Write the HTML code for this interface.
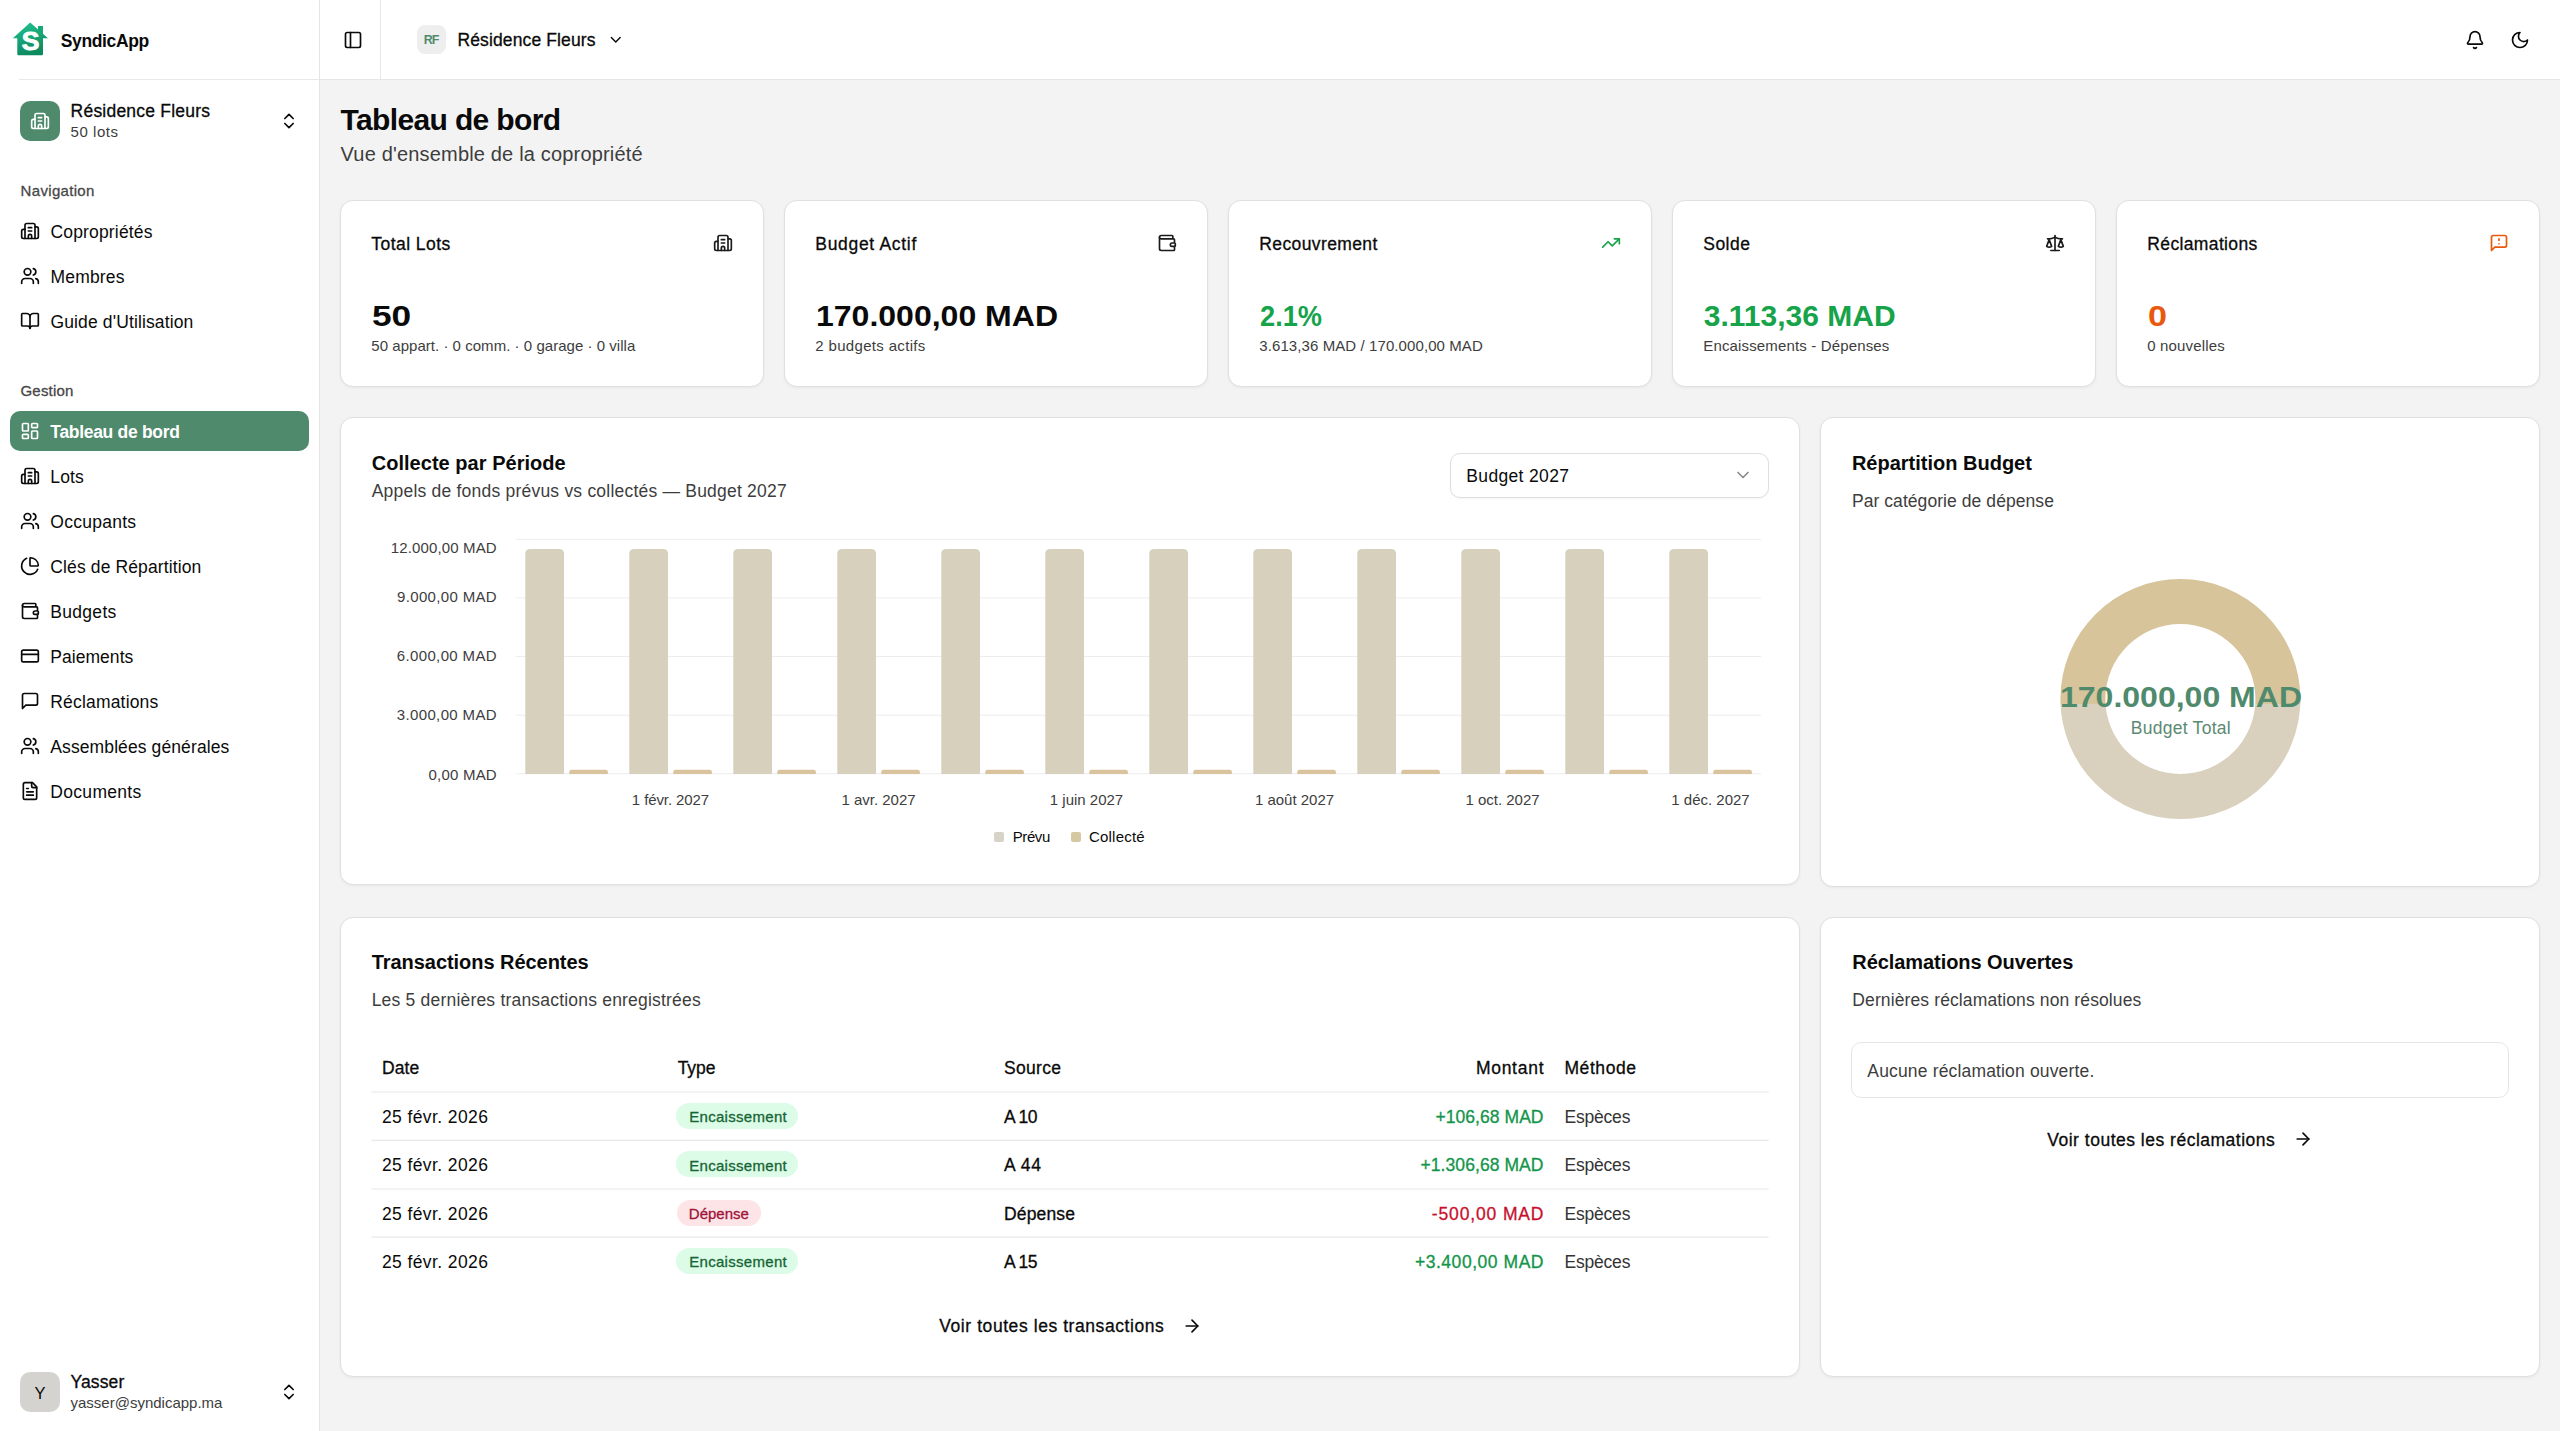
<!DOCTYPE html>
<html lang="fr"><head><meta charset="utf-8"><title>SyndicApp - Tableau de bord</title>
<style>
*{margin:0;padding:0;box-sizing:border-box}
html,body{width:2560px;height:1431px;overflow:hidden}
body{position:relative;background:#f3f3f3;font-family:"Liberation Sans",sans-serif;color:#0a0a0a}
.a{position:absolute}
.t{position:absolute;white-space:nowrap;line-height:1}
svg.i{position:absolute;fill:none;stroke:currentColor;stroke-linecap:round;stroke-linejoin:round;overflow:visible}
.card{position:absolute;background:#fff;border:1px solid #e0e0e0;border-radius:13px;box-shadow:0 1px 3px rgba(0,0,0,.05)}
</style></head><body>
<div class="a" style="left:0;top:0;width:320px;height:1431px;background:#ffffff;border-right:1px solid #e5e5e5"></div>
<div class="a" style="left:19px;top:79px;width:300px;height:1px;background:#e8e8e8"></div>
<svg class="a" style="left:0;top:0" width="60" height="60" viewBox="0 0 60 60">
<defs><linearGradient id="lg" x1="0" y1="0" x2="0.3" y2="1"><stop offset="0" stop-color="#23c492"/><stop offset="1" stop-color="#0e8a5f"/></linearGradient></defs>
<path d="M30.2 22.6 L48 38.2 L43 38.2 L43 54.2 Q43 55.2 42 55.2 L18.3 55.2 Q17.3 55.2 17.3 54.2 L17.3 38.2 L12.8 38.2 Z" fill="url(#lg)"/>
<rect x="38" y="26" width="5" height="9" fill="#17a878"/>
<text x="30.6" y="50.2" text-anchor="middle" font-family="Liberation Sans" font-weight="700" font-size="25" fill="#ffffff" stroke="#ffffff" stroke-width="0.9" transform="translate(30.6 0) scale(1.06 1) translate(-30.6 0)">S</text>
</svg>
<div class="a" style="left:20px;top:101px;width:40px;height:40px;border-radius:10px;background:#4f8a6c"></div>
<svg class="i" style="left:30.00px;top:111.00px;width:20px;height:20px;color:#ffffff;" viewBox="0 0 24 24" stroke-width="2"><path d="M10 12h4"/><path d="M10 8h4"/><path d="M14 21v-3a2 2 0 0 0-4 0v3"/><path d="M6 10H4a2 2 0 0 0-2 2v7a2 2 0 0 0 2 2h16a2 2 0 0 0 2-2V9a2 2 0 0 0-2-2h-2"/><path d="M6 21V5a2 2 0 0 1 2-2h8a2 2 0 0 1 2 2v16"/></svg>
<svg class="i" style="left:279.00px;top:111.00px;width:20px;height:20px;color:#0a0a0a;" viewBox="0 0 24 24" stroke-width="2"><path d="m7 15 5 5 5-5"/><path d="m7 9 5-5 5 5"/></svg>
<svg class="i" style="left:20.00px;top:221.00px;width:20px;height:20px;color:#0a0a0a;" viewBox="0 0 24 24" stroke-width="2"><path d="M10 12h4"/><path d="M10 8h4"/><path d="M14 21v-3a2 2 0 0 0-4 0v3"/><path d="M6 10H4a2 2 0 0 0-2 2v7a2 2 0 0 0 2 2h16a2 2 0 0 0 2-2V9a2 2 0 0 0-2-2h-2"/><path d="M6 21V5a2 2 0 0 1 2-2h8a2 2 0 0 1 2 2v16"/></svg>
<svg class="i" style="left:20.00px;top:266.00px;width:20px;height:20px;color:#0a0a0a;" viewBox="0 0 24 24" stroke-width="2"><path d="M16 21v-2a4 4 0 0 0-4-4H6a4 4 0 0 0-4 4v2"/><circle cx="9" cy="7" r="4"/><path d="M22 21v-2a4 4 0 0 0-3-3.87"/><path d="M16 3.13a4 4 0 0 1 0 7.75"/></svg>
<svg class="i" style="left:20.00px;top:311.00px;width:20px;height:20px;color:#0a0a0a;" viewBox="0 0 24 24" stroke-width="2"><path d="M12 7v14"/><path d="M3 18a1 1 0 0 1-1-1V4a1 1 0 0 1 1-1h5a4 4 0 0 1 4 4 4 4 0 0 1 4-4h5a1 1 0 0 1 1 1v13a1 1 0 0 1-1 1h-6a3 3 0 0 0-3 3 3 3 0 0 0-3-3z"/></svg>
<div class="a" style="left:10px;top:411px;width:299px;height:40px;border-radius:10px;background:#4f8a6c"></div>
<svg class="i" style="left:20.00px;top:421.00px;width:20px;height:20px;color:#ffffff;" viewBox="0 0 24 24" stroke-width="2"><rect width="7" height="9" x="3" y="3" rx="1"/><rect width="7" height="5" x="14" y="3" rx="1"/><rect width="7" height="9" x="14" y="12" rx="1"/><rect width="7" height="5" x="3" y="16" rx="1"/></svg>
<svg class="i" style="left:20.00px;top:466.00px;width:20px;height:20px;color:#0a0a0a;" viewBox="0 0 24 24" stroke-width="2"><path d="M10 12h4"/><path d="M10 8h4"/><path d="M14 21v-3a2 2 0 0 0-4 0v3"/><path d="M6 10H4a2 2 0 0 0-2 2v7a2 2 0 0 0 2 2h16a2 2 0 0 0 2-2V9a2 2 0 0 0-2-2h-2"/><path d="M6 21V5a2 2 0 0 1 2-2h8a2 2 0 0 1 2 2v16"/></svg>
<svg class="i" style="left:20.00px;top:511.00px;width:20px;height:20px;color:#0a0a0a;" viewBox="0 0 24 24" stroke-width="2"><path d="M16 21v-2a4 4 0 0 0-4-4H6a4 4 0 0 0-4 4v2"/><circle cx="9" cy="7" r="4"/><path d="M22 21v-2a4 4 0 0 0-3-3.87"/><path d="M16 3.13a4 4 0 0 1 0 7.75"/></svg>
<svg class="i" style="left:20.00px;top:556.00px;width:20px;height:20px;color:#0a0a0a;" viewBox="0 0 24 24" stroke-width="2"><path d="M21 12c.552 0 1.005-.449.95-.998a10 10 0 0 0-8.953-8.951c-.55-.055-.998.398-.998.95v8a1 1 0 0 0 1 1z"/><path d="M21.21 15.89A10 10 0 1 1 8 2.83"/></svg>
<svg class="i" style="left:20.00px;top:601.00px;width:20px;height:20px;color:#0a0a0a;" viewBox="0 0 24 24" stroke-width="2"><path d="M19 7V4a1 1 0 0 0-1-1H5a2 2 0 0 0 0 4h15a1 1 0 0 1 1 1v4h-3a2 2 0 0 0 0 4h3a1 1 0 0 0 1-1v-2a1 1 0 0 0-1-1"/><path d="M3 5v14a2 2 0 0 0 2 2h15a1 1 0 0 0 1-1v-4"/></svg>
<svg class="i" style="left:20.00px;top:646.00px;width:20px;height:20px;color:#0a0a0a;" viewBox="0 0 24 24" stroke-width="2"><rect width="20" height="14" x="2" y="5" rx="2"/><line x1="2" x2="22" y1="10" y2="10"/></svg>
<svg class="i" style="left:20.00px;top:691.00px;width:20px;height:20px;color:#0a0a0a;" viewBox="0 0 24 24" stroke-width="2"><path d="M21 15a2 2 0 0 1-2 2H7l-4 4V5a2 2 0 0 1 2-2h14a2 2 0 0 1 2 2z"/></svg>
<svg class="i" style="left:20.00px;top:736.00px;width:20px;height:20px;color:#0a0a0a;" viewBox="0 0 24 24" stroke-width="2"><path d="M16 21v-2a4 4 0 0 0-4-4H6a4 4 0 0 0-4 4v2"/><circle cx="9" cy="7" r="4"/><path d="M22 21v-2a4 4 0 0 0-3-3.87"/><path d="M16 3.13a4 4 0 0 1 0 7.75"/></svg>
<svg class="i" style="left:20.00px;top:781.00px;width:20px;height:20px;color:#0a0a0a;" viewBox="0 0 24 24" stroke-width="2"><path d="M15 2H6a2 2 0 0 0-2 2v16a2 2 0 0 0 2 2h12a2 2 0 0 0 2-2V7Z"/><path d="M14 2v4a2 2 0 0 0 2 2h4"/><path d="M10 9H8"/><path d="M16 13H8"/><path d="M16 17H8"/></svg>
<div class="a" style="left:20px;top:1372px;width:40px;height:40px;border-radius:10px;background:#d5d3cf"></div>
<svg class="i" style="left:279.00px;top:1382.00px;width:20px;height:20px;color:#0a0a0a;" viewBox="0 0 24 24" stroke-width="2"><path d="m7 15 5 5 5-5"/><path d="m7 9 5-5 5 5"/></svg>
<div class="a" style="left:320px;top:0;width:2240px;height:80px;background:#ffffff;border-bottom:1px solid #e5e5e5"></div>
<div class="a" style="left:380px;top:0;width:1px;height:79px;background:#e8e8e8"></div>
<svg class="i" style="left:343.00px;top:29.70px;width:20px;height:20px;color:#0a0a0a;" viewBox="0 0 24 24" stroke-width="2"><rect width="18" height="18" x="3" y="3" rx="2"/><path d="M9 3v18"/></svg>
<div class="a" style="left:416.5px;top:25px;width:29px;height:29px;border-radius:8px;background:#eeeeee"></div>
<svg class="i" style="left:606.85px;top:31.25px;width:17.5px;height:17.5px;color:#0a0a0a;" viewBox="0 0 24 24" stroke-width="2"><path d="m6 9 6 6 6-6"/></svg>
<svg class="i" style="left:2465.00px;top:29.85px;width:20px;height:20px;color:#0a0a0a;" viewBox="0 0 24 24" stroke-width="2"><path d="M10.268 21a2 2 0 0 0 3.464 0"/><path d="M3.262 15.326A1 1 0 0 0 4 17h16a1 1 0 0 0 .74-1.673C19.41 13.956 18 12.499 18 8A6 6 0 0 0 6 8c0 4.499-1.411 5.956-2.738 7.326"/></svg>
<svg class="i" style="left:2510.00px;top:29.70px;width:20px;height:20px;color:#0a0a0a;" viewBox="0 0 24 24" stroke-width="2"><path d="M12 3a6 6 0 0 0 9 9 9 9 0 1 1-9-9Z"/></svg>
<div class="card" style="left:340px;top:200px;width:424px;height:187px"></div>
<div class="card" style="left:784px;top:200px;width:424px;height:187px"></div>
<div class="card" style="left:1228px;top:200px;width:424px;height:187px"></div>
<div class="card" style="left:1672px;top:200px;width:424px;height:187px"></div>
<div class="card" style="left:2116px;top:200px;width:424px;height:187px"></div>
<div class="card" style="left:340px;top:417px;width:1460px;height:468px"></div>
<div class="card" style="left:1820px;top:417px;width:720px;height:470px"></div>
<div class="card" style="left:340px;top:917px;width:1460px;height:460px"></div>
<div class="card" style="left:1820px;top:917px;width:720px;height:460px"></div>
<svg class="i" style="left:712.70px;top:233.35px;width:20px;height:20px;color:#1a1a1a;" viewBox="0 0 24 24" stroke-width="2"><path d="M10 12h4"/><path d="M10 8h4"/><path d="M14 21v-3a2 2 0 0 0-4 0v3"/><path d="M6 10H4a2 2 0 0 0-2 2v7a2 2 0 0 0 2 2h16a2 2 0 0 0 2-2V9a2 2 0 0 0-2-2h-2"/><path d="M6 21V5a2 2 0 0 1 2-2h8a2 2 0 0 1 2 2v16"/></svg>
<svg class="i" style="left:1156.70px;top:233.35px;width:20px;height:20px;color:#1a1a1a;" viewBox="0 0 24 24" stroke-width="2"><path d="M19 7V4a1 1 0 0 0-1-1H5a2 2 0 0 0 0 4h15a1 1 0 0 1 1 1v4h-3a2 2 0 0 0 0 4h3a1 1 0 0 0 1-1v-2a1 1 0 0 0-1-1"/><path d="M3 5v14a2 2 0 0 0 2 2h15a1 1 0 0 0 1-1v-4"/></svg>
<svg class="i" style="left:1600.90px;top:232.85px;width:20px;height:20px;color:#16a34a;" viewBox="0 0 24 24" stroke-width="2"><polyline points="22 7 13.5 15.5 8.5 10.5 2 17"/><polyline points="16 7 22 7 22 13"/></svg>
<svg class="i" style="left:2045.00px;top:233.00px;width:20px;height:20px;color:#1a1a1a;" viewBox="0 0 24 24" stroke-width="2"><path d="m16 16 3-8 3 8c-.87.65-1.92 1-3 1s-2.13-.35-3-1Z"/><path d="m2 16 3-8 3 8c-.87.65-1.92 1-3 1s-2.13-.35-3-1Z"/><path d="M7 21h10"/><path d="M12 3v18"/><path d="M3 7h2c2 0 5-1 7-2 2 1 5 2 7 2h2"/></svg>
<svg class="i" style="left:2489.00px;top:233.20px;width:20px;height:20px;color:#ea580c;" viewBox="0 0 24 24" stroke-width="2"><path d="M21 15a2 2 0 0 1-2 2H7l-4 4V5a2 2 0 0 1 2-2h14a2 2 0 0 1 2 2z"/><path d="M12 7v2"/><path d="M12 13h.01"/></svg>
<div class="a" style="left:1449.5px;top:453px;width:319px;height:44.5px;border-radius:10px;border:1px solid #dedede;background:#fff;box-shadow:0 1px 2px rgba(0,0,0,.04)"></div>
<svg class="i" style="left:1733.00px;top:465.00px;width:20px;height:20px;color:#8a8a8a;" viewBox="0 0 24 24" stroke-width="2"><path d="m6 9 6 6 6-6"/></svg>
<svg class="a" style="left:0;top:0" width="2560" height="1431" viewBox="0 0 2560 1431">
<line x1="515.5" x2="1761" y1="539.30" y2="539.30" stroke="#ededed" stroke-width="1"/>
<line x1="515.5" x2="1761" y1="597.92" y2="597.92" stroke="#ededed" stroke-width="1"/>
<line x1="515.5" x2="1761" y1="656.55" y2="656.55" stroke="#ededed" stroke-width="1"/>
<line x1="515.5" x2="1761" y1="715.17" y2="715.17" stroke="#ededed" stroke-width="1"/>
<line x1="515.5" x2="1761" y1="773.80" y2="773.80" stroke="#ededed" stroke-width="1"/>
<path d="M525.30 774.00 L525.30 554.10 Q525.30 549.10 530.30 549.10 L559.00 549.10 Q564.00 549.10 564.00 554.10 L564.00 774.00 Z" fill="#d7d0bc"/>
<path d="M569.20 774.00 L569.20 772.30 Q569.20 769.80 571.70 769.80 L605.40 769.80 Q607.90 769.80 607.90 772.30 L607.90 774.00 Z" fill="#d9c39d"/>
<path d="M629.30 774.00 L629.30 554.10 Q629.30 549.10 634.30 549.10 L663.00 549.10 Q668.00 549.10 668.00 554.10 L668.00 774.00 Z" fill="#d7d0bc"/>
<path d="M673.20 774.00 L673.20 772.30 Q673.20 769.80 675.70 769.80 L709.40 769.80 Q711.90 769.80 711.90 772.30 L711.90 774.00 Z" fill="#d9c39d"/>
<path d="M733.30 774.00 L733.30 554.10 Q733.30 549.10 738.30 549.10 L767.00 549.10 Q772.00 549.10 772.00 554.10 L772.00 774.00 Z" fill="#d7d0bc"/>
<path d="M777.20 774.00 L777.20 772.30 Q777.20 769.80 779.70 769.80 L813.40 769.80 Q815.90 769.80 815.90 772.30 L815.90 774.00 Z" fill="#d9c39d"/>
<path d="M837.30 774.00 L837.30 554.10 Q837.30 549.10 842.30 549.10 L871.00 549.10 Q876.00 549.10 876.00 554.10 L876.00 774.00 Z" fill="#d7d0bc"/>
<path d="M881.20 774.00 L881.20 772.30 Q881.20 769.80 883.70 769.80 L917.40 769.80 Q919.90 769.80 919.90 772.30 L919.90 774.00 Z" fill="#d9c39d"/>
<path d="M941.30 774.00 L941.30 554.10 Q941.30 549.10 946.30 549.10 L975.00 549.10 Q980.00 549.10 980.00 554.10 L980.00 774.00 Z" fill="#d7d0bc"/>
<path d="M985.20 774.00 L985.20 772.30 Q985.20 769.80 987.70 769.80 L1021.40 769.80 Q1023.90 769.80 1023.90 772.30 L1023.90 774.00 Z" fill="#d9c39d"/>
<path d="M1045.30 774.00 L1045.30 554.10 Q1045.30 549.10 1050.30 549.10 L1079.00 549.10 Q1084.00 549.10 1084.00 554.10 L1084.00 774.00 Z" fill="#d7d0bc"/>
<path d="M1089.20 774.00 L1089.20 772.30 Q1089.20 769.80 1091.70 769.80 L1125.40 769.80 Q1127.90 769.80 1127.90 772.30 L1127.90 774.00 Z" fill="#d9c39d"/>
<path d="M1149.30 774.00 L1149.30 554.10 Q1149.30 549.10 1154.30 549.10 L1183.00 549.10 Q1188.00 549.10 1188.00 554.10 L1188.00 774.00 Z" fill="#d7d0bc"/>
<path d="M1193.20 774.00 L1193.20 772.30 Q1193.20 769.80 1195.70 769.80 L1229.40 769.80 Q1231.90 769.80 1231.90 772.30 L1231.90 774.00 Z" fill="#d9c39d"/>
<path d="M1253.30 774.00 L1253.30 554.10 Q1253.30 549.10 1258.30 549.10 L1287.00 549.10 Q1292.00 549.10 1292.00 554.10 L1292.00 774.00 Z" fill="#d7d0bc"/>
<path d="M1297.20 774.00 L1297.20 772.30 Q1297.20 769.80 1299.70 769.80 L1333.40 769.80 Q1335.90 769.80 1335.90 772.30 L1335.90 774.00 Z" fill="#d9c39d"/>
<path d="M1357.30 774.00 L1357.30 554.10 Q1357.30 549.10 1362.30 549.10 L1391.00 549.10 Q1396.00 549.10 1396.00 554.10 L1396.00 774.00 Z" fill="#d7d0bc"/>
<path d="M1401.20 774.00 L1401.20 772.30 Q1401.20 769.80 1403.70 769.80 L1437.40 769.80 Q1439.90 769.80 1439.90 772.30 L1439.90 774.00 Z" fill="#d9c39d"/>
<path d="M1461.30 774.00 L1461.30 554.10 Q1461.30 549.10 1466.30 549.10 L1495.00 549.10 Q1500.00 549.10 1500.00 554.10 L1500.00 774.00 Z" fill="#d7d0bc"/>
<path d="M1505.20 774.00 L1505.20 772.30 Q1505.20 769.80 1507.70 769.80 L1541.40 769.80 Q1543.90 769.80 1543.90 772.30 L1543.90 774.00 Z" fill="#d9c39d"/>
<path d="M1565.30 774.00 L1565.30 554.10 Q1565.30 549.10 1570.30 549.10 L1599.00 549.10 Q1604.00 549.10 1604.00 554.10 L1604.00 774.00 Z" fill="#d7d0bc"/>
<path d="M1609.20 774.00 L1609.20 772.30 Q1609.20 769.80 1611.70 769.80 L1645.40 769.80 Q1647.90 769.80 1647.90 772.30 L1647.90 774.00 Z" fill="#d9c39d"/>
<path d="M1669.30 774.00 L1669.30 554.10 Q1669.30 549.10 1674.30 549.10 L1703.00 549.10 Q1708.00 549.10 1708.00 554.10 L1708.00 774.00 Z" fill="#d7d0bc"/>
<path d="M1713.20 774.00 L1713.20 772.30 Q1713.20 769.80 1715.70 769.80 L1749.40 769.80 Q1751.90 769.80 1751.90 772.30 L1751.90 774.00 Z" fill="#d9c39d"/>
<rect x="994" y="832" width="10" height="10" rx="2" fill="#d7d3c6"/>
<rect x="1071" y="832" width="10" height="10" rx="2" fill="#d5c9a1"/>
<defs><clipPath id="ctop"><rect x="2000" y="500" width="400" height="204"/></clipPath><clipPath id="cbot"><rect x="2000" y="704" width="400" height="300"/></clipPath></defs>
<path d="M2060.4 699 A120 120 0 1 0 2300.4 699 A120 120 0 1 0 2060.4 699 Z M2105.4 699 A75 75 0 1 1 2255.4 699 A75 75 0 1 1 2105.4 699 Z" fill="#d7c49b" fill-rule="evenodd" clip-path="url(#ctop)"/>
<path d="M2060.4 699 A120 120 0 1 0 2300.4 699 A120 120 0 1 0 2060.4 699 Z M2105.4 699 A75 75 0 1 1 2255.4 699 A75 75 0 1 1 2105.4 699 Z" fill="#d9d1bd" fill-rule="evenodd" clip-path="url(#cbot)"/>
<line x1="371.5" x2="1768.7" y1="1092" y2="1092" stroke="#e8e8e8" stroke-width="1.2"/>
<line x1="371.5" x2="1768.7" y1="1140.3" y2="1140.3" stroke="#e8e8e8" stroke-width="1.2"/>
<line x1="371.5" x2="1768.7" y1="1189" y2="1189" stroke="#e8e8e8" stroke-width="1.2"/>
<line x1="371.5" x2="1768.7" y1="1237.2" y2="1237.2" stroke="#e8e8e8" stroke-width="1.2"/>
</svg>
<div class="a" style="left:676.3px;top:1103.00px;width:121.5px;height:26px;border-radius:13px;background:#dcfce7"></div>
<div class="a" style="left:676.3px;top:1151.25px;width:121.5px;height:26px;border-radius:13px;background:#dcfce7"></div>
<div class="a" style="left:677px;top:1199.50px;width:84px;height:26px;border-radius:13px;background:#fde4e6"></div>
<div class="a" style="left:676.3px;top:1247.75px;width:121.5px;height:26px;border-radius:13px;background:#dcfce7"></div>
<div class="a" style="left:1851px;top:1042px;width:658px;height:56px;border-radius:10px;border:1px solid #e6e6e6;background:#fff"></div>
<svg class="i" style="left:1182.00px;top:1316.10px;width:20px;height:20px;color:#0a0a0a;" viewBox="0 0 24 24" stroke-width="2"><path d="M5 12h14"/><path d="m12 5 7 7-7 7"/></svg>
<svg class="i" style="left:2292.80px;top:1129.20px;width:20px;height:20px;color:#0a0a0a;" viewBox="0 0 24 24" stroke-width="2"><path d="M5 12h14"/><path d="m12 5 7 7-7 7"/></svg>
<div class="t" style="left:60.80px;top:33.00px;font-size:17.5px;color:#0a0a0a;font-weight:700;letter-spacing:-0.376px">SyndicApp</div>
<div class="t" style="left:70.60px;top:103.00px;font-size:17.5px;color:#0a0a0a;-webkit-text-stroke:0.3px #0a0a0a;letter-spacing:0.215px">Résidence Fleurs</div>
<div class="t" style="left:70.60px;top:124.00px;font-size:15px;color:#3d3d3d;letter-spacing:0.549px">50 lots</div>
<div class="t" style="left:20.60px;top:183.00px;font-size:15px;color:#474747;-webkit-text-stroke:0.3px #474747;letter-spacing:0.323px">Navigation</div>
<div class="t" style="left:50.50px;top:224.00px;font-size:17.5px;color:#0a0a0a;letter-spacing:0.163px">Copropriétés</div>
<div class="t" style="left:50.50px;top:269.00px;font-size:17.5px;color:#0a0a0a;letter-spacing:0.177px">Membres</div>
<div class="t" style="left:50.50px;top:314.00px;font-size:17.5px;color:#0a0a0a;letter-spacing:0.128px">Guide d&#x27;Utilisation</div>
<div class="t" style="left:20.50px;top:383.00px;font-size:15px;color:#474747;-webkit-text-stroke:0.3px #474747;letter-spacing:0.183px">Gestion</div>
<div class="t" style="left:50.30px;top:424.00px;font-size:17.5px;color:#ffffff;font-weight:700;letter-spacing:-0.304px">Tableau de bord</div>
<div class="t" style="left:50.30px;top:469.00px;font-size:17.5px;color:#0a0a0a;letter-spacing:0.141px">Lots</div>
<div class="t" style="left:50.30px;top:514.00px;font-size:17.5px;color:#0a0a0a;letter-spacing:0.268px">Occupants</div>
<div class="t" style="left:50.30px;top:559.00px;font-size:17.5px;color:#0a0a0a;letter-spacing:0.121px">Clés de Répartition</div>
<div class="t" style="left:50.30px;top:604.00px;font-size:17.5px;color:#0a0a0a;letter-spacing:0.297px">Budgets</div>
<div class="t" style="left:50.30px;top:649.00px;font-size:17.5px;color:#0a0a0a;letter-spacing:0.039px">Paiements</div>
<div class="t" style="left:50.30px;top:694.00px;font-size:17.5px;color:#0a0a0a;letter-spacing:0.179px">Réclamations</div>
<div class="t" style="left:50.30px;top:739.00px;font-size:17.5px;color:#0a0a0a;letter-spacing:0.103px">Assemblées générales</div>
<div class="t" style="left:50.30px;top:784.00px;font-size:17.5px;color:#0a0a0a;letter-spacing:0.311px">Documents</div>
<div class="t" style="left:70.50px;top:1374.00px;font-size:17.5px;color:#0a0a0a;-webkit-text-stroke:0.3px #0a0a0a;letter-spacing:0.116px">Yasser</div>
<div class="t" style="left:70.50px;top:1395.00px;font-size:15px;color:#3d3d3d">yasser@syndicapp.ma</div>
<div class="t" style="left:34.49px;top:1385.00px;font-size:16.5px;color:#0a0a0a">Y</div>
<div class="t" style="left:423.80px;top:34.00px;font-size:12.5px;color:#4f8a6c;font-weight:700;letter-spacing:-1.072px">RF</div>
<div class="t" style="left:457.50px;top:32.00px;font-size:17.5px;color:#0a0a0a;-webkit-text-stroke:0.3px #0a0a0a;letter-spacing:0.122px">Résidence Fleurs</div>
<div class="t" style="left:340.60px;top:105.00px;font-size:30px;color:#0a0a0a;font-weight:700;letter-spacing:-0.648px">Tableau de bord</div>
<div class="t" style="left:340.60px;top:144.00px;font-size:20px;color:#3d3d3d;letter-spacing:0.174px">Vue d&#x27;ensemble de la copropriété</div>
<div class="t" style="left:371.30px;top:236.00px;font-size:17.5px;color:#0a0a0a;-webkit-text-stroke:0.3px #0a0a0a;letter-spacing:0.455px">Total Lots</div>
<div class="t" style="left:371.80px;top:301.00px;font-size:30px;color:#0a0a0a;font-weight:700;transform:scaleX(1.1760);transform-origin:0 0">50</div>
<div class="t" style="left:371.30px;top:338.00px;font-size:15px;color:#3d3d3d;letter-spacing:0.034px">50 appart. · 0 comm. · 0 garage · 0 villa</div>
<div class="t" style="left:815.30px;top:236.00px;font-size:17.5px;color:#0a0a0a;-webkit-text-stroke:0.3px #0a0a0a;letter-spacing:0.690px">Budget Actif</div>
<div class="t" style="left:815.80px;top:301.00px;font-size:30px;color:#0a0a0a;font-weight:700;transform:scaleX(1.0670);transform-origin:0 0">170.000,00 MAD</div>
<div class="t" style="left:815.30px;top:338.00px;font-size:15px;color:#3d3d3d;letter-spacing:0.328px">2 budgets actifs</div>
<div class="t" style="left:1259.30px;top:236.00px;font-size:17.5px;color:#0a0a0a;-webkit-text-stroke:0.3px #0a0a0a;letter-spacing:0.381px">Recouvrement</div>
<div class="t" style="left:1259.80px;top:301.00px;font-size:30px;color:#16a34a;font-weight:700;transform:scaleX(0.9066);transform-origin:0 0">2.1%</div>
<div class="t" style="left:1259.30px;top:338.00px;font-size:15px;color:#3d3d3d;letter-spacing:0.090px">3.613,36 MAD / 170.000,00 MAD</div>
<div class="t" style="left:1703.30px;top:236.00px;font-size:17.5px;color:#0a0a0a;-webkit-text-stroke:0.3px #0a0a0a;letter-spacing:0.459px">Solde</div>
<div class="t" style="left:1703.80px;top:301.00px;font-size:30px;color:#16a34a;font-weight:700">3.113,36 MAD</div>
<div class="t" style="left:1703.30px;top:338.00px;font-size:15px;color:#3d3d3d;letter-spacing:0.148px">Encaissements - Dépenses</div>
<div class="t" style="left:2147.30px;top:236.00px;font-size:17.5px;color:#0a0a0a;-webkit-text-stroke:0.3px #0a0a0a;letter-spacing:0.361px">Réclamations</div>
<div class="t" style="left:2147.80px;top:301.00px;font-size:30px;color:#ea580c;font-weight:700;transform:scaleX(1.1386);transform-origin:0 0">0</div>
<div class="t" style="left:2147.30px;top:338.00px;font-size:15px;color:#3d3d3d;letter-spacing:0.151px">0 nouvelles</div>
<div class="t" style="left:371.70px;top:453.00px;font-size:20px;color:#0a0a0a;font-weight:700;letter-spacing:0.031px">Collecte par Période</div>
<div class="t" style="left:371.70px;top:483.00px;font-size:17.5px;color:#3d3d3d;letter-spacing:0.215px">Appels de fonds prévus vs collectés — Budget 2027</div>
<div class="t" style="left:1466.30px;top:468.00px;font-size:17.5px;color:#0a0a0a;letter-spacing:0.343px">Budget 2027</div>
<div class="t" style="left:390.70px;top:540.00px;font-size:15px;color:#3d3d3d;letter-spacing:0.147px">12.000,00 MAD</div>
<div class="t" style="left:397.00px;top:589.00px;font-size:15px;color:#3d3d3d;letter-spacing:0.346px">9.000,00 MAD</div>
<div class="t" style="left:396.70px;top:648.00px;font-size:15px;color:#3d3d3d;letter-spacing:0.374px">6.000,00 MAD</div>
<div class="t" style="left:396.70px;top:707.00px;font-size:15px;color:#3d3d3d;letter-spacing:0.374px">3.000,00 MAD</div>
<div class="t" style="left:428.50px;top:767.00px;font-size:15px;color:#3d3d3d;letter-spacing:0.214px">0,00 MAD</div>
<div class="t" style="left:631.85px;top:792.00px;font-size:15px;color:#3d3d3d;letter-spacing:-0.101px">1 févr. 2027</div>
<div class="t" style="left:841.38px;top:792.00px;font-size:15px;color:#3d3d3d">1 avr. 2027</div>
<div class="t" style="left:1049.80px;top:792.00px;font-size:15px;color:#3d3d3d">1 juin 2027</div>
<div class="t" style="left:1254.88px;top:792.00px;font-size:15px;color:#3d3d3d">1 août 2027</div>
<div class="t" style="left:1465.38px;top:792.00px;font-size:15px;color:#3d3d3d">1 oct. 2027</div>
<div class="t" style="left:1671.30px;top:792.00px;font-size:15px;color:#3d3d3d">1 déc. 2027</div>
<div class="t" style="left:1012.70px;top:829.00px;font-size:15px;color:#0a0a0a;letter-spacing:-0.397px">Prévu</div>
<div class="t" style="left:1089.00px;top:829.00px;font-size:15px;color:#0a0a0a;letter-spacing:0.200px">Collecté</div>
<div class="t" style="left:1851.90px;top:453.00px;font-size:20px;color:#0a0a0a;font-weight:700">Répartition Budget</div>
<div class="t" style="left:1851.90px;top:493.00px;font-size:17.5px;color:#3d3d3d;letter-spacing:0.069px">Par catégorie de dépense</div>
<div class="t" style="left:2059.50px;top:682.00px;font-size:30px;color:#4f8a6c;font-weight:700;transform:scaleX(1.0670);transform-origin:0 0">170.000,00 MAD</div>
<div class="t" style="left:2130.70px;top:720.00px;font-size:17.5px;color:#5b8a72;letter-spacing:0.274px">Budget Total</div>
<div class="t" style="left:371.70px;top:952.00px;font-size:20px;color:#0a0a0a;font-weight:700;letter-spacing:-0.044px">Transactions Récentes</div>
<div class="t" style="left:371.70px;top:992.00px;font-size:17.5px;color:#3d3d3d;letter-spacing:0.200px">Les 5 dernières transactions enregistrées</div>
<div class="t" style="left:381.90px;top:1060.00px;font-size:17.5px;color:#0a0a0a;-webkit-text-stroke:0.3px #0a0a0a;letter-spacing:0.144px">Date</div>
<div class="t" style="left:677.70px;top:1060.00px;font-size:17.5px;color:#0a0a0a;-webkit-text-stroke:0.3px #0a0a0a;letter-spacing:-0.084px">Type</div>
<div class="t" style="left:1004.00px;top:1060.00px;font-size:17.5px;color:#0a0a0a;-webkit-text-stroke:0.3px #0a0a0a;letter-spacing:0.309px">Source</div>
<div class="t" style="left:1475.90px;top:1060.00px;font-size:17.5px;color:#0a0a0a;-webkit-text-stroke:0.3px #0a0a0a;letter-spacing:0.728px">Montant</div>
<div class="t" style="left:1564.40px;top:1060.00px;font-size:17.5px;color:#0a0a0a;-webkit-text-stroke:0.3px #0a0a0a;letter-spacing:0.598px">Méthode</div>
<div class="t" style="left:381.90px;top:1109.00px;font-size:17.5px;color:#0a0a0a;letter-spacing:0.400px">25 févr. 2026</div>
<div class="t" style="left:689.20px;top:1109.00px;font-size:15px;color:#166534;-webkit-text-stroke:0.3px #166534;letter-spacing:0.307px">Encaissement</div>
<div class="t" style="left:1004.00px;top:1109.00px;font-size:17.5px;color:#0a0a0a;-webkit-text-stroke:0.3px #0a0a0a;letter-spacing:-0.516px">A 10</div>
<div class="t" style="left:1435.50px;top:1109.00px;font-size:17.5px;color:#13954b;-webkit-text-stroke:0.3px #13954b;letter-spacing:0.050px">+106,68 MAD</div>
<div class="t" style="left:1564.40px;top:1109.00px;font-size:17.5px;color:#333333;letter-spacing:-0.188px">Espèces</div>
<div class="t" style="left:381.90px;top:1157.00px;font-size:17.5px;color:#0a0a0a;letter-spacing:0.400px">25 févr. 2026</div>
<div class="t" style="left:689.20px;top:1158.00px;font-size:15px;color:#166534;-webkit-text-stroke:0.3px #166534;letter-spacing:0.307px">Encaissement</div>
<div class="t" style="left:1004.00px;top:1157.00px;font-size:17.5px;color:#0a0a0a;-webkit-text-stroke:0.3px #0a0a0a;letter-spacing:0.651px">A 44</div>
<div class="t" style="left:1420.50px;top:1157.00px;font-size:17.5px;color:#13954b;-webkit-text-stroke:0.3px #13954b;letter-spacing:0.076px">+1.306,68 MAD</div>
<div class="t" style="left:1564.40px;top:1157.00px;font-size:17.5px;color:#333333;letter-spacing:-0.188px">Espèces</div>
<div class="t" style="left:381.90px;top:1206.00px;font-size:17.5px;color:#0a0a0a;letter-spacing:0.400px">25 févr. 2026</div>
<div class="t" style="left:688.80px;top:1206.00px;font-size:15px;color:#9f1239;-webkit-text-stroke:0.3px #9f1239">Dépense</div>
<div class="t" style="left:1004.00px;top:1206.00px;font-size:17.5px;color:#0a0a0a;-webkit-text-stroke:0.3px #0a0a0a;letter-spacing:0.156px">Dépense</div>
<div class="t" style="left:1431.80px;top:1206.00px;font-size:17.5px;color:#c8102e;-webkit-text-stroke:0.3px #c8102e;letter-spacing:0.859px">-500,00 MAD</div>
<div class="t" style="left:1564.40px;top:1206.00px;font-size:17.5px;color:#333333;letter-spacing:-0.188px">Espèces</div>
<div class="t" style="left:381.90px;top:1254.00px;font-size:17.5px;color:#0a0a0a;letter-spacing:0.400px">25 févr. 2026</div>
<div class="t" style="left:689.20px;top:1254.00px;font-size:15px;color:#166534;-webkit-text-stroke:0.3px #166534;letter-spacing:0.307px">Encaissement</div>
<div class="t" style="left:1004.00px;top:1254.00px;font-size:17.5px;color:#0a0a0a;-webkit-text-stroke:0.3px #0a0a0a;letter-spacing:-0.516px">A 15</div>
<div class="t" style="left:1414.90px;top:1254.00px;font-size:17.5px;color:#13954b;-webkit-text-stroke:0.3px #13954b;letter-spacing:0.542px">+3.400,00 MAD</div>
<div class="t" style="left:1564.40px;top:1254.00px;font-size:17.5px;color:#333333;letter-spacing:-0.188px">Espèces</div>
<div class="t" style="left:939.30px;top:1318.00px;font-size:17.5px;color:#0a0a0a;-webkit-text-stroke:0.3px #0a0a0a;letter-spacing:0.569px">Voir toutes les transactions</div>
<div class="t" style="left:1852.30px;top:952.00px;font-size:20px;color:#0a0a0a;font-weight:700;letter-spacing:-0.066px">Réclamations Ouvertes</div>
<div class="t" style="left:1852.30px;top:992.00px;font-size:17.5px;color:#3d3d3d;letter-spacing:0.118px">Dernières réclamations non résolues</div>
<div class="t" style="left:1867.30px;top:1063.00px;font-size:17.5px;color:#3d3d3d;letter-spacing:0.162px">Aucune réclamation ouverte.</div>
<div class="t" style="left:2047.30px;top:1132.00px;font-size:17.5px;color:#0a0a0a;-webkit-text-stroke:0.3px #0a0a0a;letter-spacing:0.500px">Voir toutes les réclamations</div>
</body></html>
